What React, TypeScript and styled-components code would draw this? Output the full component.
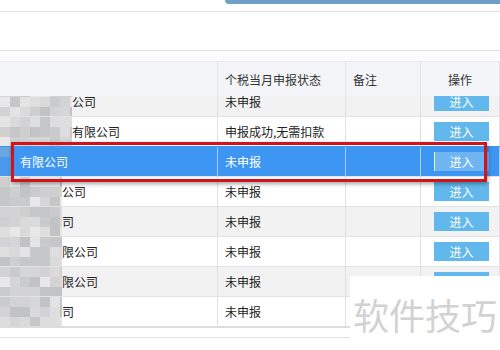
import React from 'react';
import styled, { createGlobalStyle } from 'styled-components';

const GlobalStyle = createGlobalStyle`
  html, body {
    margin: 0;
    padding: 0;
    background: #ffffff;
  }
  body {
    font-family: "Noto Sans CJK SC", "Microsoft YaHei", sans-serif;
    font-size: 12px;
    color: #333;
  }
`;

const Page = styled.div`
  position: relative;
  width: 500px;
  height: 350px;
  overflow: hidden;
  background: #fff;
`;

const TopStrip = styled.div`
  height: 11px;
  border-bottom: 1px solid #e3e3e3;
`;

const BlueTab = styled.div`
  margin-left: 225px;
  height: 4px;
  background: #6d9fc9;
  border-bottom-left-radius: 4px;
`;

const Toolbar = styled.div`
  height: 38px;
  border-bottom: 1px solid #e1e1e1;
`;

const Spacer = styled.div`
  height: 10px;
  background: #fcfcfc;
`;

const Table = styled.div`
  width: 500px;
  border-bottom: 2px solid #dcdcdc;
`;

const cols = '218px 128px 75px 79px';

const HeaderRow = styled.div`
  display: grid;
  grid-template-columns: ${cols};
  height: 35px;
  background: #f3f5f8;
  border-top: 1px solid #e8eaee;
  box-sizing: border-box;
`;

const HeadCell = styled.div<{ $center?: boolean }>`
  display: flex;
  align-items: center;
  justify-content: ${(p) => (p.$center ? 'center' : 'flex-start')};
  padding: 0 7px;
  border-right: 1px solid #e2e4e8;
  color: #333;
`;

const Body = styled.div`
  height: 230px;
  overflow: hidden;
`;

const Rows = styled.div`
  margin-top: -10px;
`;

const Row = styled.div<{ $tone: 'gray' | 'white' | 'active' }>`
  display: grid;
  grid-template-columns: ${cols};
  height: 30px;
  box-sizing: border-box;
  border-top: 1px solid ${(p) => (p.$tone === 'active' ? '#3d96f2' : '#e2e2e2')};
  background: ${(p) =>
    p.$tone === 'gray' ? '#f2f2f2' : p.$tone === 'active' ? '#3d96f2' : '#ffffff'};
  color: ${(p) => (p.$tone === 'active' ? '#ffffff' : '#222')};
`;

const Cell = styled.div<{ $active?: boolean }>`
  display: flex;
  align-items: center;
  padding: 0 7px;
  border-right: 1px solid ${(p) => (p.$active ? '#a9cff8' : '#e0e0e0')};
  white-space: nowrap;
  overflow: hidden;
`;

const NameCell = styled(Cell)`
  padding: 0;
`;

const NameText = styled.span<{ $active?: boolean }>`
  padding-left: ${(p) => (p.$active ? '8px' : '0')};
`;

const Mosaic = styled.div<{ $w: number }>`
  display: grid;
  grid-template-columns: repeat(${(p) => Math.ceil(p.$w / 10)}, 10px);
  grid-auto-rows: 10px;
  width: ${(p) => p.$w}px;
  height: 30px;
  overflow: hidden;
  flex-shrink: 0;
  filter: blur(0.6px);
`;

const Block = styled.div``;

const ActionCell = styled(Cell)`
  justify-content: center;
  padding: 0;
`;

const EnterButton = styled.button<{ $active?: boolean }>`
  width: 55px;
  height: 19px;
  border: none;
  border-left: 1px solid ${(p) => (p.$active ? '#e6f2fd' : 'transparent')};
  background: ${(p) => (p.$active ? '#6fb5f2' : '#62b8ec')};
  color: #fff;
  font-family: inherit;
  font-size: 12px;
  padding: 0;
  margin-left: 2px;
`;

const Underline = styled.div`
  height: 9px;
  border-bottom: 1px solid #e3e3e3;
`;

const Highlight = styled.div`
  position: absolute;
  left: 11px;
  top: 142px;
  width: 470px;
  height: 34px;
  border: 3px solid #d1141c;
  box-shadow: 1px 2px 4px rgba(0, 0, 0, 0.35);
  pointer-events: none;
`;

const Watermark = styled.div`
  position: absolute;
  left: 350px;
  top: 276px;
  width: 150px;
  height: 74px;
  background: #fff;
  display: flex;
  align-items: center;
  justify-content: center;
  font-size: 36px;
  color: #d2d2d2;
  padding-top: 2px;
  box-sizing: border-box;
`;

const grays = ['#cfcfcf', '#dadada', '#c6c7c9', '#e4e4e4', '#d3d3d5', '#c2c3c5', '#dedede', '#cacbcd', '#e8e8e8', '#d6d6d8'];
const blues = ['#5a9fe6', '#4b98ee', '#6aa6e0', '#4f9aea'];

function blockColor(seed: number, active: boolean) {
  const list = active ? blues : grays;
  const n = Math.abs(Math.sin(seed * 12.9898) * 43758.5453);
  return list[Math.floor(n) % list.length];
}

type RowData = {
  tone: 'gray' | 'white' | 'active';
  blur: number;
  name: string;
  status: string;
};

const rows: RowData[] = [
  { tone: 'gray', blur: 72, name: '公司', status: '未申报' },
  { tone: 'white', blur: 72, name: '有限公司', status: '申报成功,无需扣款' },
  { tone: 'active', blur: 12, name: '有限公司', status: '未申报' },
  { tone: 'white', blur: 62, name: '公司', status: '未申报' },
  { tone: 'gray', blur: 62, name: '司', status: '未申报' },
  { tone: 'white', blur: 62, name: '限公司', status: '未申报' },
  { tone: 'gray', blur: 62, name: '限公司', status: '未申报' },
  { tone: 'white', blur: 62, name: '司', status: '未申报' },
];

const App: React.FC = () => {
  return (
    <Page>
      <GlobalStyle />
      <TopStrip>
        <BlueTab />
      </TopStrip>
      <Toolbar />
      <Spacer />
      <Table>
        <HeaderRow>
          <HeadCell />
          <HeadCell>个税当月申报状态</HeadCell>
          <HeadCell>备注</HeadCell>
          <HeadCell $center>操作</HeadCell>
        </HeaderRow>
        <Body>
          <Rows>
            {rows.map((r, i) => {
              const active = r.tone === 'active';
              const count = Math.ceil(r.blur / 10) * 3;
              return (
                <Row key={i} $tone={r.tone}>
                  <NameCell $active={active}>
                    <Mosaic $w={r.blur}>
                      {Array.from({ length: count }, (_, k) => (
                        <Block
                          key={k}
                          style={{ background: blockColor(i * 31 + k + 1, active) }}
                        />
                      ))}
                    </Mosaic>
                    <NameText $active={active}>{r.name}</NameText>
                  </NameCell>
                  <Cell $active={active}>{r.status}</Cell>
                  <Cell $active={active} />
                  <ActionCell $active={active}>
                    <EnterButton $active={active}>进入</EnterButton>
                  </ActionCell>
                </Row>
              );
            })}
          </Rows>
        </Body>
      </Table>
      <Underline />
      <Highlight />
      <Watermark>软件技巧</Watermark>
    </Page>
  );
};

export default App;
